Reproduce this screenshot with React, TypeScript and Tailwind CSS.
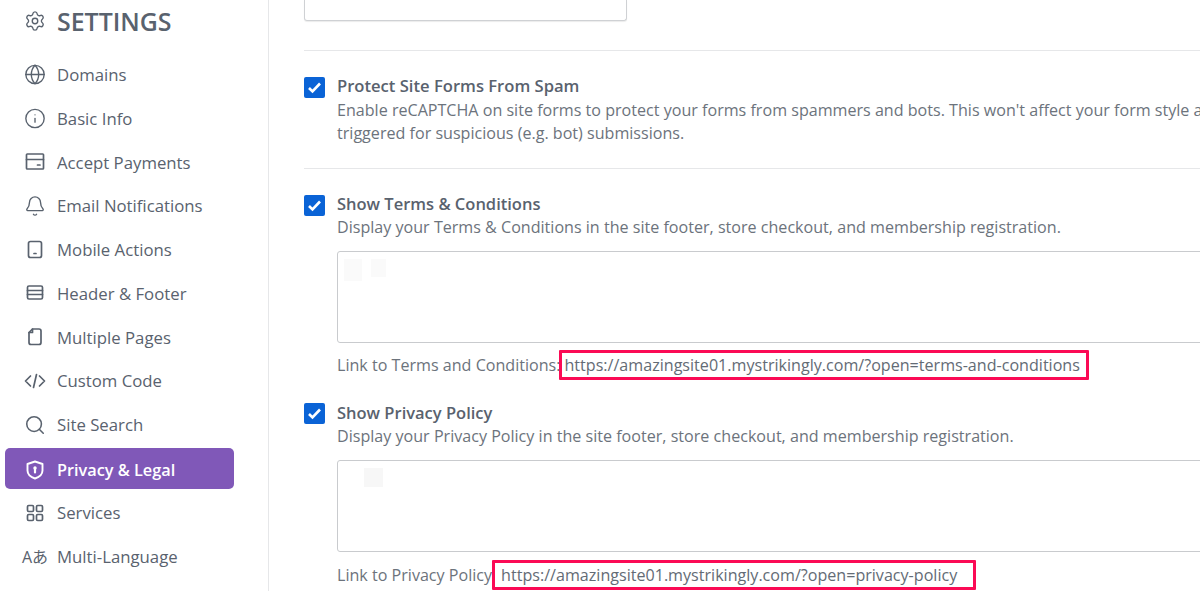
import React from "react";
import { Settings, Globe, Info, Bell, Search } from "lucide-react";

const Svg = ({ children }: { children: React.ReactNode }) => (
  <svg width="22" height="22" viewBox="0 0 22 22" fill="none" stroke="currentColor" strokeWidth="1.7" strokeLinecap="round" strokeLinejoin="round">
    {children}
  </svg>
);

const CardIcon = () => (
  <Svg>
    <rect x="2.500" y="3" width="17" height="15" rx="0.800" />
    <path d="M2.500 8.500h17M13.500 14h2.500" />
  </Svg>
);
const MobileIcon = () => (
  <Svg>
    <rect x="4.500" y="2.500" width="13" height="16" rx="2" />
    <path d="M10 14.500h2" />
  </Svg>
);
const HeaderIcon = () => (
  <Svg>
    <rect x="3.500" y="4" width="15" height="13" rx="1.500" />
    <path d="M3.500 8.500h15M3.500 12.500h15" />
  </Svg>
);
const PagesIcon = () => (
  <Svg>
    <path d="M8.500 3h6.500a2 2 0 0 1 2 2v11.500a2 2 0 0 1-2 2H7a2 2 0 0 1-2-2V6.500z" />
    <path d="M8.500 3v3.500H5" />
  </Svg>
);
const CodeIcon = () => (
  <Svg>
    <path d="M6.500 6 1.500 11l5 5M15.500 6l5 5-5 5M12.500 4.500l-3 13" />
  </Svg>
);
const ShieldIcon = () => (
  <Svg>
    <path d="M11 2.500 18.500 5v6.500c0 4-3.200 6.500-7.500 8-4.300-1.500-7.500-4-7.500-8V5z" strokeWidth="1.900" />
    <circle cx="11" cy="9" r="1.700" fill="currentColor" stroke="none" />
    <path d="M11 9v4.500" strokeWidth="2.200" />
  </Svg>
);
const GridIcon = () => (
  <Svg>
    <rect x="3.500" y="3.500" width="6" height="6" rx="1.200" />
    <rect x="12.500" y="3.500" width="6" height="6" rx="1.200" />
    <rect x="3.500" y="12.500" width="6" height="6" rx="1.200" />
    <rect x="12.500" y="12.500" width="6" height="6" rx="1.200" />
  </Svg>
);

const items: { label: string; icon: React.ReactNode; active?: boolean }[] = [
  { label: "Domains", icon: <Globe size={23} strokeWidth={1.5} /> },
  { label: "Basic Info", icon: <Info size={23} strokeWidth={1.5} /> },
  { label: "Accept Payments", icon: <CardIcon /> },
  { label: "Email Notifications", icon: <Bell size={22} strokeWidth={1.5} /> },
  { label: "Mobile Actions", icon: <MobileIcon /> },
  { label: "Header & Footer", icon: <HeaderIcon /> },
  { label: "Multiple Pages", icon: <PagesIcon /> },
  { label: "Custom Code", icon: <CodeIcon /> },
  { label: "Site Search", icon: <Search size={22} strokeWidth={1.7} /> },
  { label: "Privacy & Legal", icon: <ShieldIcon />, active: true },
  { label: "Services", icon: <GridIcon /> },
  { label: "Multi-Language", icon: <span className="text-[16px] leading-none whitespace-nowrap font-['Open_Sans','Noto_Sans_CJK_JP',sans-serif]">Aあ</span> },
];

const Check = () => (
  <div className="w-[21px] h-[21px] shrink-0 rounded-[2px] bg-[#0a63d6] flex items-center justify-center mt-[1px]">
    <svg width="15" height="13" viewBox="0 0 15 13" fill="none">
      <path d="M2 7l3.500 3.500L13 2.500" stroke="white" strokeWidth="2.600" />
    </svg>
  </div>
);

const Editor = ({ children }: { children?: React.ReactNode }) => (
  <div className="mt-[12px] h-[92px] w-[900px] border border-[#c9cbce] rounded-[3px] bg-white flex items-start">
    {children}
  </div>
);

const LinkBox = ({ children, className }: { children: React.ReactNode; className: string }) => (
  <span className={`inline-block h-[30px] leading-[24px] border-[3px] border-[#fb0a55] rounded-[1px] text-[#636b75] ${className}`}>
    {children}
  </span>
);

export default function App() {
  return (
    <div className="h-[591px] w-[1200px] overflow-hidden flex bg-white text-[16.1px] text-[#6c737c] font-['Open_Sans',sans-serif]">
      <aside className="w-[269px] shrink-0 border-r border-[#e6e7e9] text-[#59626e] text-[16.75px]">
        <div className="h-[53px] flex items-center pl-[24px] pb-[11px]">
          <span className="w-[22px] flex justify-center">
            <Settings size={22} strokeWidth={1.5} />
          </span>
          <span className="ml-[11px] text-[24.9px] font-semibold leading-none">SETTINGS</span>
        </div>
        <nav className="pl-[5px] w-[234px]">
          {items.map((it) => (
            <div key={it.label} className="h-[43.72px]">
              <div
                className={`flex items-center pl-[19px] ${
                  it.active
                    ? "mt-[1px] h-[41.5px] pt-[2px] rounded-[5px] bg-[#8058b8] text-white font-semibold text-[16.3px] relative top-[0.5px]"
                    : "h-full"
                }`}
              >
                <span className="w-[22px] flex justify-center">{it.icon}</span>
                <span className="ml-[11px]">{it.label}</span>
              </div>
            </div>
          ))}
        </nav>
      </aside>

      <main className="flex-1 min-w-0 pl-[35px] overflow-hidden">
        <div className="w-[323px] h-[21px] border border-t-0 border-[#cfd1d4] rounded-b-[3px] shadow-[0_1px_1px_rgba(0,0,0,0.08)]" />

        <div className="mt-[29px] border-t border-[#e6e7e9] pt-[25px] pb-[23px] flex gap-[12px] w-[1000px]">
          <Check />
          <div className="leading-[23px] whitespace-nowrap">
            <div className="-mt-[1px] mb-[1px] h-[23px] leading-[21px] font-semibold text-[16.6px] text-[#59626e]">Protect Site Forms From Spam</div>
            <div>Enable reCAPTCHA on site forms to protect your forms from spammers and bots. This won't affect your form style and is only</div>
            <div>triggered for suspicious (e.g. bot) submissions.</div>
          </div>
        </div>

        <div className="border-t border-[#e6e7e9] pt-[25px] flex gap-[12px] w-[1000px]">
          <Check />
          <div className="-mt-[1px] leading-[23px] whitespace-nowrap">
            <div className="h-[23px] leading-[21px] font-semibold text-[16.5px] text-[#59626e]">Show Terms &amp; Conditions</div>
            <div>Display your Terms &amp; Conditions in the site footer, store checkout, and membership registration.</div>
            <Editor>
              <div className="ml-[6px] mt-[7px] w-[18px] h-[22px] bg-[#fafafa]" />
              <div className="ml-[9px] mt-[7px] w-[15px] h-[18px] bg-[#fafafa]" />
            </Editor>
            <div className="mt-[7px] h-[30px] flex items-center">
              <span>Link to Terms and Conditions:</span>
              <LinkBox className="pl-[2px] pr-[6px] -ml-[1px]">https://amazingsite01.mystrikingly.com/?open=terms-and-conditions</LinkBox>
            </div>
          </div>
        </div>

        <div className="mt-[22px] flex gap-[12px] w-[1000px]">
          <Check />
          <div className="leading-[23px] whitespace-nowrap">
            <div className="h-[23px] leading-[21px] font-semibold text-[16.5px] text-[#59626e]">Show Privacy Policy</div>
            <div>Display your Privacy Policy in the site footer, store checkout, and membership registration.</div>
            <Editor>
              <div className="ml-[26px] mt-[7px] w-[19px] h-[19px] bg-[#f7f7f7]" />
            </Editor>
            <div className="mt-[8px] h-[30px] flex items-center">
              <span>Link to Privacy Policy</span>
              <LinkBox className="pl-[6px] pr-[16px]">https://amazingsite01.mystrikingly.com/?open=privacy-policy</LinkBox>
            </div>
          </div>
        </div>
      </main>
    </div>
  );
}
